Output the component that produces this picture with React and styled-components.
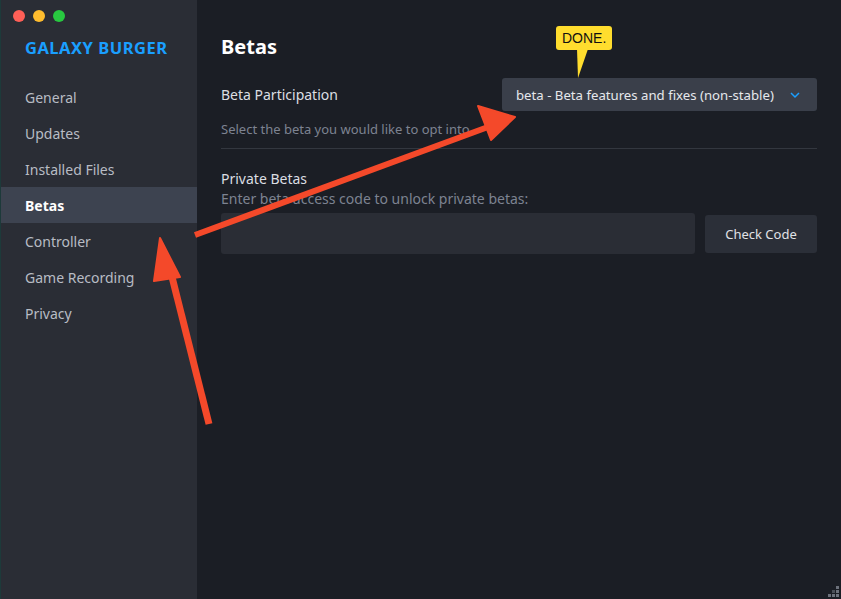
import React from "react";
import styled, { createGlobalStyle } from "styled-components";

const Global = createGlobalStyle`
  html, body { margin: 0; padding: 0; background: #1b1e25; }
  body { font-family: "Noto Sans", "DejaVu Sans", sans-serif; }
  * { box-sizing: border-box; }
`;

const NAV = ["General", "Updates", "Installed Files", "Betas", "Controller", "Game Recording", "Privacy"];

function App() {
  return (
    <>
      <Global />
      <Window>
        <Sidebar>
          <Lights>
            <Light color="#fe5f57" />
            <Light color="#febc2e" />
            <Light color="#28c840" />
          </Lights>
          <Logo>GALAXY BURGER</Logo>
          <Nav>
            {NAV.map((item) => (
              <NavItem key={item} active={item === "Betas"}>
                {item}
              </NavItem>
            ))}
          </Nav>
        </Sidebar>
        <Main>
          <Title>Betas</Title>
          <Row>
            <Label>Beta Participation</Label>
            <SelectWrap>
              <Callout>DONE.</Callout>
              <Select>
                <span>beta - Beta features and fixes (non-stable)</span>
                <svg width="12" height="8" viewBox="0 0 12 8">
                  <path d="M2 2l4 4 4-4" fill="none" stroke="#1a9fff" strokeWidth="1.5" />
                </svg>
              </Select>
            </SelectWrap>
          </Row>
          <Hint>Select the beta you would like to opt into</Hint>
          <Divider />
          <Label>Private Betas</Label>
          <Hint tight>Enter beta access code to unlock private betas:</Hint>
          <CodeRow>
            <CodeInput />
            <Button>Check Code</Button>
          </CodeRow>
        </Main>
        <Overlay width="841" height="599" viewBox="0 0 841 599">
          <g fill="#f4492a" stroke="#f4492a" strokeLinecap="butt">
            <line x1="209" y1="424" x2="169" y2="265" strokeWidth="7" />
            <polygon points="160,238 180,277 154,281" strokeWidth="2" strokeLinejoin="round" />
            <line x1="195" y1="235" x2="488" y2="127" strokeWidth="6" />
            <polygon points="515,117 478,106 491,140" strokeWidth="2" strokeLinejoin="round" />
          </g>
        </Overlay>
        <Grip width="14" height="14" viewBox="0 0 14 14">
          <g fill="#6c717b">
            <rect x="11" y="3" width="3" height="3" />
            <rect x="7" y="7" width="3" height="3" opacity="0.6" />
            <rect x="11" y="7" width="3" height="3" />
            <rect x="3" y="11" width="3" height="3" />
            <rect x="7" y="11" width="3" height="3" />
            <rect x="11" y="11" width="3" height="3" />
          </g>
        </Grip>
      </Window>
    </>
  );
}

export default App;

const Window = styled.div`
  position: relative;
  width: 841px;
  height: 599px;
  display: flex;
  overflow: hidden;
  background: #1b1e25;
`;

const Sidebar = styled.aside`
  width: 197px;
  flex-shrink: 0;
  background: #2a2d35;
  border-left: 1px solid #1d3a3a;
  display: flex;
  flex-direction: column;
`;

const Lights = styled.div`
  display: flex;
  gap: 8px;
  padding: 10px 0 0 12px;
`;

const Light = styled.span`
  width: 12px;
  height: 12px;
  border-radius: 50%;
  background: ${(p) => p.color};
`;

const Logo = styled.div`
  margin: 16px 0 0 24px;
  color: #1a9fff;
  font-size: 16.5px;
  font-weight: 700;
  letter-spacing: 0.5px;
  line-height: 20px;
`;

const Nav = styled.nav`
  margin-top: 21px;
  display: flex;
  flex-direction: column;
`;

const NavItem = styled.div`
  height: 36px;
  display: flex;
  align-items: center;
  padding-left: 24px;
  font-size: 14px;
  color: ${(p) => (p.active ? "#ffffff" : "#b8bcc4")};
  font-weight: ${(p) => (p.active ? 700 : 400)};
  background: ${(p) => (p.active ? "#3d4350" : "transparent")};
`;

const Main = styled.main`
  flex: 1;
  padding: 33px 24px 0 24px;
  display: flex;
  flex-direction: column;
`;

const Title = styled.h1`
  margin: 0;
  color: #ffffff;
  font-size: 20px;
  font-weight: 700;
  line-height: 28px;
`;

const Row = styled.div`
  margin-top: 17px;
  display: flex;
  align-items: center;
  justify-content: space-between;
`;

const Label = styled.div`
  color: #dcdee3;
  font-size: 14px;
  line-height: 19px;
`;

const SelectWrap = styled.div`
  position: relative;
`;

const Select = styled.div`
  width: 315px;
  height: 33px;
  background: #3a3f4a;
  border-radius: 3px;
  display: flex;
  align-items: center;
  justify-content: space-between;
  padding: 0 16px 0 14px;
  color: #e6e8ec;
  font-size: 13.2px;
`;

const Callout = styled.div`
  position: absolute;
  left: 54px;
  top: -52px;
  background: #ffdd2e;
  color: #111;
  font-family: "Liberation Sans", Arial, sans-serif;
  font-size: 14px;
  line-height: 24px;
  padding: 0 6px;
  border-radius: 3px;
  &::after {
    content: "";
    position: absolute;
    left: 21px;
    top: 23px;
    width: 12px;
    height: 29px;
    background: #ffdd2e;
    clip-path: polygon(0 0, 11px 0, 1px 100%);
  }
`;

const Hint = styled.div`
  margin-top: ${(p) => (p.tight ? "1px" : "9px")};
  color: #7d8391;
  font-size: ${(p) => (p.tight ? "14px" : "13px")};
  line-height: 19px;
`;

const Divider = styled.hr`
  margin: 9px 0 20px;
  border: none;
  border-top: 1px solid #33373f;
  height: 0;
`;

const CodeRow = styled.div`
  margin-top: 5px;
  display: flex;
  align-items: center;
  gap: 10px;
`;

const CodeInput = styled.div`
  flex: 1;
  height: 41px;
  background: #2a2d35;
  border-radius: 3px;
`;

const Button = styled.div`
  width: 112px;
  height: 38px;
  background: #2b2f38;
  border-radius: 3px;
  display: flex;
  align-items: center;
  justify-content: center;
  color: #e0e2e6;
  font-size: 13px;
`;

const Overlay = styled.svg`
  position: absolute;
  left: 0;
  top: 0;
  pointer-events: none;
`;

const Grip = styled.svg`
  position: absolute;
  right: 2px;
  bottom: 2px;
`;
